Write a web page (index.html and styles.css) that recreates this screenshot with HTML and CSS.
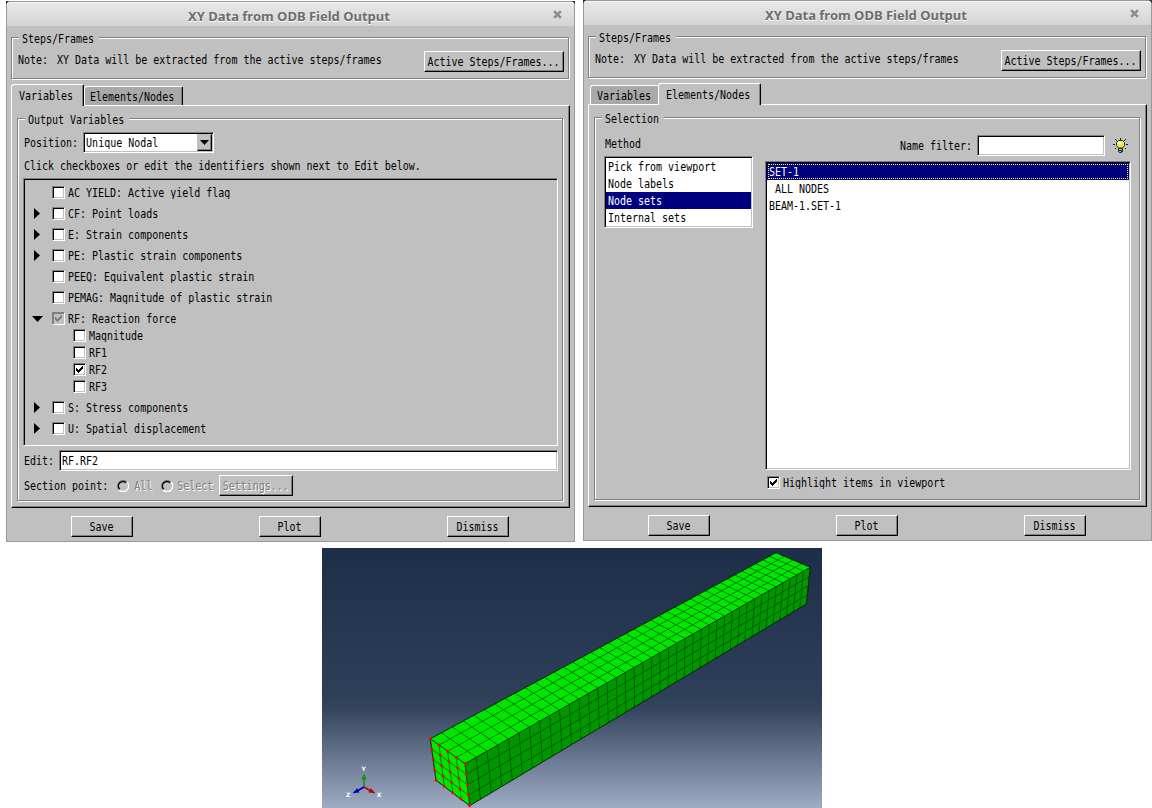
FILE: index.html
```html
<!DOCTYPE html>
<html lang="en">
<head>
<meta charset="utf-8">
<title>XY Data from ODB Field Output</title>
<link rel="stylesheet" href="styles.css">
</head>
<body>
<svg class="defs" width="0" height="0">
  <symbol id="check" viewBox="0 0 8 8"><path d="M0 2h1v1h1v1h1v-1h1v-1h1v-1h1v-1h1v3h-1v1h-1v1h-1v1h-1v1h-1v-1h-1v-1h-1z" fill="currentColor"/></symbol>
  <symbol id="close" viewBox="0 0 8 8"><path d="M1 1l6 6M7 1l-6 6" stroke="currentColor" stroke-width="2.2"/></symbol>
  <symbol id="right" viewBox="0 0 6 11"><path d="M0 0l6 5.5l-6 5.5z"/></symbol>
  <symbol id="down" viewBox="0 0 11 6"><path d="M0 0h11l-5.5 6z"/></symbol>
</svg>
<main class="dialogs">
  <section class="dialog first">
    <header class="title"><span>XY Data from ODB Field Output</span><svg class="close"><use href="#close"/></svg></header>
    <div class="group steps">
      <div class="legend"><span class="t">Steps/Frames</span></div>
      <span class="t note"><span class="lead">Note:</span> XY Data will be extracted from the active steps/frames</span>
      <button class="btn wide"><span class="t">Active Steps/Frames...</span></button>
    </div>
    <nav class="tabs">
      <div class="tab active vars"><span class="t">Variables</span></div>
      <div class="tab elems"><span class="t">Elements/Nodes</span></div>
    </nav>
    <div class="panel">
      <div class="group body">
        <div class="legend"><span class="t">Output Variables</span></div>
        <div class="line position"><span class="t">Position:</span>
          <div class="sunken combo"><span class="t">Unique Nodal</span><div class="drop"><svg width="9" height="5"><use href="#down"/></svg></div></div>
        </div>
        <p class="hint"><span class="t">Click checkboxes or edit the identifiers shown next to Edit below.</span></p>
        <div class="sunken tree">
          <div class="row"><i></i><b class="cb"></b><span class="t">AC YIELD: Active yield flag</span></div>
          <div class="row"><i><svg width="6" height="11"><use href="#right"/></svg></i><b class="cb"></b><span class="t">CF: Point loads</span></div>
          <div class="row"><i><svg width="6" height="11"><use href="#right"/></svg></i><b class="cb"></b><span class="t">E: Strain components</span></div>
          <div class="row"><i><svg width="6" height="11"><use href="#right"/></svg></i><b class="cb"></b><span class="t">PE: Plastic strain components</span></div>
          <div class="row"><i></i><b class="cb"></b><span class="t">PEEQ: Equivalent plastic strain</span></div>
          <div class="row"><i></i><b class="cb"></b><span class="t">PEMAG: Magnitude of plastic strain</span></div>
          <div class="row"><i class="open"><svg width="11" height="6"><use href="#down"/></svg></i><b class="cb mixed"><svg><use href="#check"/></svg></b><span class="t">RF: Reaction force</span></div>
          <div class="children">
            <div class="row sub"><b class="cb"></b><span class="t">Magnitude</span></div>
            <div class="row sub"><b class="cb"></b><span class="t">RF1</span></div>
            <div class="row sub"><b class="cb"><svg><use href="#check"/></svg></b><span class="t">RF2</span></div>
            <div class="row sub"><b class="cb"></b><span class="t">RF3</span></div>
          </div>
          <div class="row"><i><svg width="6" height="11"><use href="#right"/></svg></i><b class="cb"></b><span class="t">S: Stress components</span></div>
          <div class="row"><i><svg width="6" height="11"><use href="#right"/></svg></i><b class="cb"></b><span class="t">U: Spatial displacement</span></div>
        </div>
        <div class="line edit"><span class="t">Edit:</span><div class="sunken field"><span class="t">RF.RF2</span></div></div>
        <div class="line section"><span class="t">Section point:</span>
          <svg class="radio" viewBox="0 0 12 12"><path d="M2 10A5.5 5.5 0 0 1 10 2" stroke="#808080"/><path d="M2.800 9.200A4.500 4.500 0 0 1 9.200 2.800" stroke="#000" stroke-width="1.400"/><path d="M10 2A5.5 5.5 0 0 1 2 10" stroke="#fff" stroke-width="1.300"/></svg>
          <span class="t off all">All</span>
          <svg class="radio" viewBox="0 0 12 12"><path d="M2 10A5.5 5.5 0 0 1 10 2" stroke="#808080"/><path d="M2.800 9.200A4.500 4.500 0 0 1 9.200 2.800" stroke="#000" stroke-width="1.400"/><path d="M10 2A5.5 5.5 0 0 1 2 10" stroke="#fff" stroke-width="1.300"/></svg>
          <span class="t off select">Select</span>
          <button class="btn settings"><span class="t off">Settings...</span></button>
        </div>
      </div>
    </div>
    <footer class="actions"><button class="btn"><span class="t">Save</span></button><button class="btn"><span class="t">Plot</span></button><button class="btn"><span class="t">Dismiss</span></button></footer>
  </section>

  <section class="dialog second">
    <header class="title"><span>XY Data from ODB Field Output</span><svg class="close"><use href="#close"/></svg></header>
    <div class="group steps">
      <div class="legend"><span class="t">Steps/Frames</span></div>
      <span class="t note"><span class="lead">Note:</span> XY Data will be extracted from the active steps/frames</span>
      <button class="btn wide"><span class="t">Active Steps/Frames...</span></button>
    </div>
    <nav class="tabs">
      <div class="tab vars"><span class="t">Variables</span></div>
      <div class="tab active elems"><span class="t">Elements/Nodes</span></div>
    </nav>
    <div class="panel">
      <div class="group body selection">
        <div class="legend"><span class="t">Selection</span></div>
        <div class="method">
          <span class="t">Method</span>
          <div class="sunken list">
            <div class="item"><span class="t">Pick from viewport</span></div>
            <div class="item"><span class="t">Node labels</span></div>
            <div class="item on"><span class="t">Node sets</span></div>
            <div class="item"><span class="t">Internal sets</span></div>
          </div>
        </div>
        <div class="sets">
          <div class="filter"><span class="t">Name filter:</span><div class="sunken name"></div>
            <svg class="bulb" viewBox="0 0 15 15"><path d="M7 0h1v2h-1zM2 1h1v1h1v1h-1v-1h-1zM12 1h1v1h-1v1h-1v-1h1zM0 6h2v1h-2zM13 6h2v1h-2zM2 10h1v1h-1zM12 10h1v1h-1z" fill="#123"/><path d="M5.500 2.500h4l2 2v3l-2 2.500h-4l-2-2.500v-3z" fill="#fbe050" stroke="#243c34"/><path d="M5 4h3v2h-3z" fill="#fff3b8"/><path d="M5 10h5v4h-1v1h-3v-1h-1z" fill="#243c34"/><path d="M6 11h3v1h-3zM6 13h2v1h-2z" fill="#9ab59a"/></svg>
          </div>
          <div class="sunken names">
            <div class="item on focus"><span class="t">SET-1</span></div>
            <div class="item"><span class="t">&nbsp;ALL NODES</span></div>
            <div class="item"><span class="t">BEAM-1.SET-1</span></div>
          </div>
          <div class="highlight"><b class="cb"><svg><use href="#check"/></svg></b><span class="t">Highlight items in viewport</span></div>
        </div>
      </div>
    </div>
    <footer class="actions"><button class="btn"><span class="t">Save</span></button><button class="btn"><span class="t">Plot</span></button><button class="btn"><span class="t">Dismiss</span></button></footer>
  </section>
</main>
<svg class="viewport" viewBox="0 0 500 260">
  <g id="beam"></g>
  <g class="triad">
    <path d="M42 239V230" stroke="#0a9a0a" stroke-width="1.6"/><path d="M39.300 231.500L42 225.500L44.700 231.500z" fill="#0a9a0a"/>
    <path d="M42 239L48 242.500" stroke="#b00" stroke-width="1.600"/><path d="M46.500 244.500L48.800 240.300L53.500 245.300z" fill="#b00"/>
    <path d="M42 239L36 242.500" stroke="#00b" stroke-width="1.600"/><path d="M35.200 240.300L37.500 244.500L30.500 245.300z" fill="#00b"/>
    <text x="39.500" y="223">Y</text><text x="24" y="249">Z</text><text x="54.800" y="249">X</text>
  </g>
</svg>
<script src="mesh.js"></script>
</body>
</html>
```
FILE: styles.css
```css
* { box-sizing: border-box; }
body { margin: 0; background: #fff; color: #000; font-family: "DejaVu Sans Mono", monospace; font-size: 10px; overflow: hidden; }
.defs { position: absolute; }
p { margin: 0; }
.t { display: inline-block; white-space: pre; line-height: 13px; letter-spacing: -0.01px; transform: scaleY(1.18); }
.off { color: #808080; text-shadow: 1px 1px 0 #fff; }

.dialogs { display: flex; align-items: flex-start; gap: 8px; height: 542px; padding-left: 6px; }
.dialog { position: relative; width: 569px; height: 541px; flex: none; background: #c0c0c0; border: 1px solid #999; }
.dialog::before, .dialog::after { content: ""; position: absolute; top: -1px; width: 3px; height: 3px; background: #1c2c46; }
.dialog::before { left: -1px; clip-path: polygon(0 0, 100% 0, 0 100%); }
.dialog::after { right: -1px; clip-path: polygon(0 0, 100% 0, 100% 100%); }
.second::after { background: #084a08; }
.first { margin-top: 1px; }
.title { height: 24px; display: flex; align-items: center; padding: 2px 12px 0 181px; justify-content: space-between; background: linear-gradient(#e8e8e8, #d4d4d4); border-top: 1px solid #f6f6f6; font: bold 13px "Noto Sans", sans-serif; color: #6c6c6c; text-shadow: 0 1px 0 #fff; white-space: nowrap; }
.close { width: 9px; height: 9px; margin-top: -2px; color: #8c8c8c; }

.group { position: relative; border: 1px solid #808080; box-shadow: 1px 1px 0 #fff, inset 1px 1px 0 #fff; }
.legend { position: absolute; top: -6px; left: 7px; height: 14px; padding: 0 5px 0 3px; background: #c0c0c0; }
.steps { display: flex; align-items: flex-start; justify-content: space-between; width: 558px; height: 42px; margin: 11px 0 0 4px; padding: 13px 4px 0 6px; }
.note { margin-top: 2px; }
.lead { margin-right: 3px; }
.btn { display: flex; align-items: center; justify-content: center; width: 62px; height: 21px; padding: 0 1px 0 0; background: #c0c0c0; border: 1px solid #000; border-top-color: #fff; border-left-color: #fff; box-shadow: inset -1px -1px 0 #808080; font: inherit; color: inherit; }
.btn.wide { width: 140px; }
.btn.settings { width: 74px; }

.tabs { display: flex; align-items: flex-end; height: 21px; margin: 5px 0 0 4px; }
.tab { height: 19px; border: 1px solid #fff; border-right: 1px solid #000; border-bottom: 0; border-radius: 3px 2px 0 0; background: #a9a9a9; box-shadow: inset -1px 0 0 #808080; padding: 3px 0 0 6px; }
.tab.active { position: relative; height: 22px; margin-bottom: -1px; background: #c0c0c0; padding-top: 4px; }
.first .vars { width: 73px; padding-left: 7px; }
.first .elems { width: 99px; padding-left: 5px; }
.second .vars { width: 68px; margin-left: 2px; border-right: 0; box-shadow: none; }
.second .elems { width: 103px; padding-left: 7px; }
.panel { width: 559px; height: 403px; margin-left: 4px; border: 1px solid #000; border-top-color: #fff; border-left-color: #fff; box-shadow: inset -1px -1px 0 #808080; padding: 12px 0 0 5px; }
.body { width: 546px; height: 383px; padding: 13px 0 0 5px; }

.sunken { border: 1px solid #fff; border-top-color: #808080; border-left-color: #808080; box-shadow: inset 1px 1px 0 #000, inset -1px -1px 0 #c0c0c0; background: #fff; }
.line { display: flex; align-items: center; height: 21px; padding-left: 1px; }
.combo { display: flex; align-items: center; justify-content: space-between; width: 131px; height: 21px; margin-left: 5px; padding: 1px 1px 1px 2px; }
.drop { display: flex; align-items: center; justify-content: center; width: 15px; height: 17px; background: #c0c0c0; border: 1px solid #000; border-top-color: #c0c0c0; border-left-color: #c0c0c0; box-shadow: inset -1px -1px 0 #808080; }
.hint { height: 25px; padding: 6px 0 0 1px; }
.tree { width: 535px; height: 268px; padding-top: 3px; background: #c0c0c0; box-shadow: inset 1px 1px 0 #000; }
.row { display: flex; align-items: center; height: 21px; padding-left: 10px; }
.row i { display: flex; width: 18px; height: 11px; }
.row i.open { margin-left: -2px; width: 20px; height: 6px; }
.row .t { margin: 0 0 0 3px; }
.cb { display: flex; align-items: center; justify-content: center; width: 13px; height: 13px; background: #fff; border: 1px solid #fff; border-top-color: #808080; border-left-color: #808080; box-shadow: inset 1px 1px 0 #000, inset -1px -1px 0 #c0c0c0; }
.cb svg { width: 8px; height: 8px; }
.mixed { background: #c0c0c0; color: #808080; box-shadow: inset 1px 1px 0 #808080; }
.children { margin: -2px 0 2px; }
.sub { height: 17px; padding-left: 49px; }
.edit { margin-top: 4px; }
.field { display: flex; align-items: center; width: 499px; height: 21px; margin-left: 5px; padding: 0 0 0 2px; }
.section { margin-top: 4px; }
.radio { width: 12px; height: 12px; margin-left: 9px; fill: none; }
.all { margin-left: 5px; }
.select { margin: 0 6px 0 4px; }

.selection { display: flex; align-items: flex-start; padding-left: 9px; }
.method { display: flex; flex-direction: column; align-items: flex-start; padding: 6px 0 0; width: 161px; }
.method > .t { margin-left: 1px; }
.list { width: 149px; height: 72px; margin-top: 6px; padding: 1px; }
.item { display: flex; align-items: center; height: 17px; padding-left: 2px; }
.item.on { background: #000080; color: #fff; }
.item.focus { outline: 1px dotted #ffff60; outline-offset: -2px; }
.sets { width: 366px; padding-top: 4px; }
.filter { display: flex; align-items: center; padding-left: 135px; height: 21px; }
.name { width: 128px; height: 21px; margin-left: 5px; }
.bulb { width: 15px; height: 15px; margin-left: 8px; }
.names { width: 366px; height: 309px; margin-top: 5px; padding: 1px; }
.highlight { display: flex; align-items: center; gap: 3px; height: 13px; margin: 6px 0 0 2px; }
.actions { display: flex; gap: 126px; padding: 8px 0 0 64px; }

.viewport { display: block; width: 500px; height: 260px; margin: 6px 0 0 322px; background: linear-gradient(#1d2e48 0%, #2e4059 57%, #36475f 63%, #9eacc4 100%); }
.bright { fill: #00e600; }
.shade { fill: #009600; }
.mesh { fill: none; stroke: #003c00; stroke-width: 0.6; }
.outline { fill: none; stroke: #102010; stroke-width: 0.7; }
.node { fill: #f00; }
.triad text { font: bold 6px "DejaVu Sans", sans-serif; fill: #fff; }
```
FILE: mesh.js
```js
// Perspective-projected beam: 4 x 4 x 40 elements.
const near = { tl: [108.3, 190.7], tr: [143, 215.7], bl: [114, 232.3], br: [147.7, 257.7] };
const far = { tl: [454, 4.7], tr: [488.3, 19.3], br: [484.3, 56] };
const DEPTH = 1.3, LENGTH = 40, SIDE = 4;

const mix = (a, b, t) => [a[0] + (b[0] - a[0]) * t, a[1] + (b[1] - a[1]) * t];
const along = (a, b, t) => mix(a, b, t * DEPTH / (1 + t * (DEPTH - 1)));
const pt = p => p[0].toFixed(2) + " " + p[1].toFixed(2);
const seg = (a, b) => "M" + pt(a) + "L" + pt(b);
const quad = (cls, ...p) => `<path class="${cls}" d="M${p.map(pt).join("L")}Z"/>`;

let lines = "";
for (let i = 0; i <= LENGTH; i++) {
  const t = i / LENGTH;
  const c = along(near.tr, far.tr, t);
  lines += seg(along(near.tl, far.tl, t), c) + seg(c, along(near.br, far.br, t));
}
let nodes = "";
for (let i = 0; i <= SIDE; i++) {
  const t = i / SIDE;
  lines += seg(mix(near.tl, near.tr, t), mix(far.tl, far.tr, t));
  lines += seg(mix(near.tr, near.br, t), mix(far.tr, far.br, t));
  lines += seg(mix(near.tl, near.tr, t), mix(near.bl, near.br, t));
  lines += seg(mix(near.tl, near.bl, t), mix(near.tr, near.br, t));
  for (let j = 0; j <= SIDE; j++) {
    const p = mix(mix(near.tl, near.tr, t), mix(near.bl, near.br, t), j / SIDE);
    nodes += `<circle class="node" cx="${p[0].toFixed(2)}" cy="${p[1].toFixed(2)}" r="1.45"/>`;
  }
}
document.getElementById("beam").innerHTML =
  quad("bright", near.tl, near.tr, far.tr, far.tl) +
  quad("shade", near.tr, near.br, far.br, far.tr) +
  quad("bright", near.tl, near.tr, near.br, near.bl) +
  `<path class="mesh" d="${lines}"/>` +
  quad("outline", near.tl, far.tl, far.tr, far.br, near.br, near.bl) + nodes;
```
